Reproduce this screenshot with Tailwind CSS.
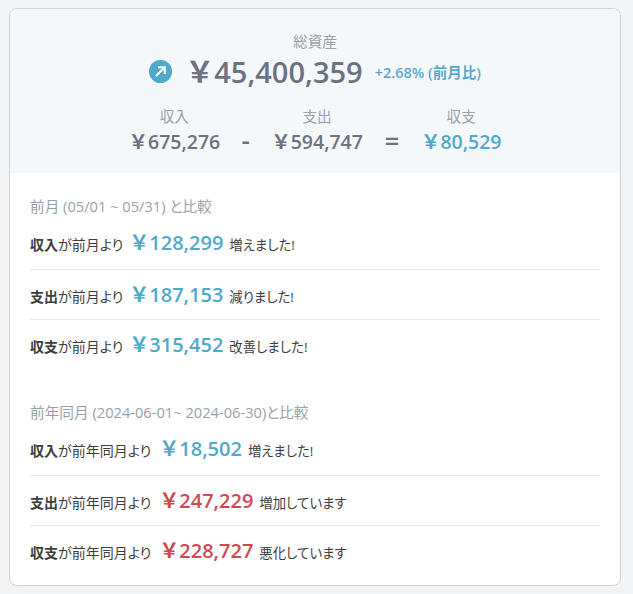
<!DOCTYPE html>
<html lang="ja">
<head>
    <meta charset="UTF-8">
    <title>総資産</title>
    <script src="https://cdn.jsdelivr.net/npm/@tailwindcss/browser@4"></script>
</head>
<body class="bg-[#f3f4f6] font-['Open_Sans','Noto_Sans_CJK_JP',sans-serif] text-[#3d3d3d]">
    <div class="pt-2 pl-[9px] pr-[12px] pb-2 h-[594px]">
        <div class="bg-white rounded-[8px] border border-[#d1d3d5] overflow-hidden h-[578px]">
            <!-- summary -->
            <div class="bg-[#f5f8fb] h-[164px] pt-[22px] flex flex-col items-center">
                <div class="text-[14.67px] leading-5 text-[#9aa0a6]">総資産</div>
                <div class="flex items-center h-[42px] -mt-[1px]">
                    <span class="w-[23px] h-[23px] rounded-full bg-[#4fa9cb] flex items-center justify-center mr-[13px]">
                        <svg class="w-[15px] h-[15px]" viewBox="0 0 15 15" fill="none" stroke="white" stroke-width="2"><path d="M3 12 L11.5 3.5 M5 3.2 H11.8 V10"/></svg>
                    </span>
                    <span class="text-[29px] font-semibold text-[#6b7280] leading-none">&#xFFE5;45,400,359</span>
                    <span class="text-[14.5px] font-semibold text-[#5aa9cc] ml-3 mt-[4px] [font-feature-settings:'palt']">+2.68% (前月比)</span>
                </div>
                <div class="flex items-start mt-[14px]">
                    <div class="text-center">
                        <div class="text-[14.67px] leading-5 text-[#9aa0a6]">収入</div>
                        <div class="text-[19.5px] font-semibold text-[#6b7280] leading-7 mt-[2px]">&#xFFE5;675,276</div>
                    </div>
                    <div class="text-[26px] font-semibold text-[#6b7280] w-[51px] text-center mt-[20px] leading-7">-</div>
                    <div class="text-center">
                        <div class="text-[14.67px] leading-5 text-[#9aa0a6]">支出</div>
                        <div class="text-[19.5px] font-semibold text-[#6b7280] leading-7 mt-[2px]">&#xFFE5;594,747</div>
                    </div>
                    <div class="text-[26px] font-semibold text-[#6b7280] w-[58px] text-center mt-[20px] leading-7">=</div>
                    <div class="text-center">
                        <div class="text-[14.67px] leading-5 text-[#9aa0a6]">収支</div>
                        <div class="text-[19.5px] font-semibold text-[#4fa9cb] leading-7 mt-[2px]">&#xFFE5;80,529</div>
                    </div>
                </div>
            </div>

            <!-- compare -->
            <div class="pl-5 pr-5 pt-[23px] [font-feature-settings:'palt']">
                <div class="text-[14.67px] leading-5 text-[#9aa0a6]">前月 (05/01 ~ 05/31) と比較</div>
                <div class="mt-[4px]">
                    <div class="h-[50px] pt-[9px] flex items-baseline border-b border-[#e5e7eb] text-sm"><b class="font-bold">収入</b>が前月より<span class="text-xl font-semibold text-[#4fa9cb] mx-[6px] [font-feature-settings:normal]">&#xFFE5;128,299</span><span class="text-[13.4px]">増えました!</span></div>
                    <div class="h-[50px] pt-[11px] flex items-baseline border-b border-[#e5e7eb] text-sm"><b class="font-bold">支出</b>が前月より<span class="text-xl font-semibold text-[#4fa9cb] mx-[6px] [font-feature-settings:normal]">&#xFFE5;187,153</span><span class="text-[13.4px]">減りました!</span></div>
                    <div class="h-[50px] pt-[11px] flex items-baseline text-sm"><b class="font-bold">収支</b>が前月より<span class="text-xl font-semibold text-[#4fa9cb] mx-[6px] [font-feature-settings:normal]">&#xFFE5;315,452</span><span class="text-[13.4px]">改善しました!</span></div>
                </div>
                <div class="text-[14.67px] leading-5 text-[#9aa0a6] mt-[32px]">前年同月 (2024-06-01~ 2024-06-30)と比較</div>
                <div class="mt-[4px]">
                    <div class="h-[50px] pt-[9px] flex items-baseline border-b border-[#e5e7eb] text-sm"><b class="font-bold">収入</b>が前年同月より<span class="text-xl font-semibold text-[#4fa9cb] ml-[8px] mr-[6px] [font-feature-settings:normal]">&#xFFE5;18,502</span><span class="text-[13.4px]">増えました!</span></div>
                    <div class="h-[50px] pt-[11px] flex items-baseline border-b border-[#e5e7eb] text-sm"><b class="font-bold">支出</b>が前年同月より<span class="text-xl font-semibold text-[#d0494f] ml-[8px] mr-[6px] [font-feature-settings:normal]">&#xFFE5;247,229</span><span class="text-[13.4px]">増加しています</span></div>
                    <div class="h-[50px] pt-[11px] flex items-baseline text-sm"><b class="font-bold">収支</b>が前年同月より<span class="text-xl font-semibold text-[#d0494f] ml-[8px] mr-[6px] [font-feature-settings:normal]">&#xFFE5;228,727</span><span class="text-[13.4px]">悪化しています</span></div>
                </div>
            </div>
        </div>
    </div>
</body>
</html>
